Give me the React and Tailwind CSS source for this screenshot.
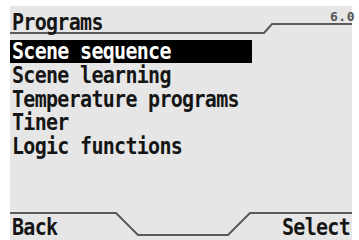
export default function App() {
  const items = ['Scene learning', 'Temperature programs', 'Tiner', 'Logic functions'];
  return (
    <div className="w-[359px] h-[240px] bg-white overflow-hidden">
      <div
        className="relative ml-[10px] mt-[6px] w-[342px] h-[234px] bg-[#e6e6e6] text-[#151515]"
        style={{ fontFamily: '"DejaVu Sans Mono", monospace' }}
      >
        <svg className="absolute inset-0" width="342" height="234" fill="none" stroke="#5a5a5a" strokeWidth="2">
          <path d="M0 27 H254 L262 18 H345" />
          <path d="M0 207 H106 L128 229 H218 L240 207 H345" />
        </svg>
        <div className="flex items-start justify-between h-[34px] pl-[2px]">
          <span className="inline-block scale-y-[1.15] text-[20px] leading-[22px] font-bold tracking-[-0.7px] mt-[5px]">Programs</span>
          <span className="text-[13px] leading-[14px] font-bold tracking-[0.5px] text-[#555] mt-[4px] mr-[-3px]">6.0</span>
        </div>
        <div className="flex flex-col">
          <div className="w-[242px] h-[23px] bg-black text-white pl-[2px] pt-[1px]">
            <span className="inline-block scale-y-[1.15] text-[20px] leading-[21px] font-bold tracking-[-0.7px]">Scene sequence</span>
          </div>
          {items.map((t) => (
            <div key={t} className="h-[23.5px] pl-[2px] pt-[2px]">
              <span className="inline-block scale-y-[1.15] text-[20px] leading-[20px] font-bold tracking-[-0.7px]">{t}</span>
            </div>
          ))}
        </div>
        <div className="absolute left-0 right-0 bottom-[3px] flex justify-between px-[2px] text-[20px] leading-[20px] font-bold tracking-[-0.7px]">
          <span className="inline-block scale-y-[1.15]">Back</span>
          <span className="inline-block scale-y-[1.15]">Select</span>
        </div>
      </div>
    </div>
  );
}
